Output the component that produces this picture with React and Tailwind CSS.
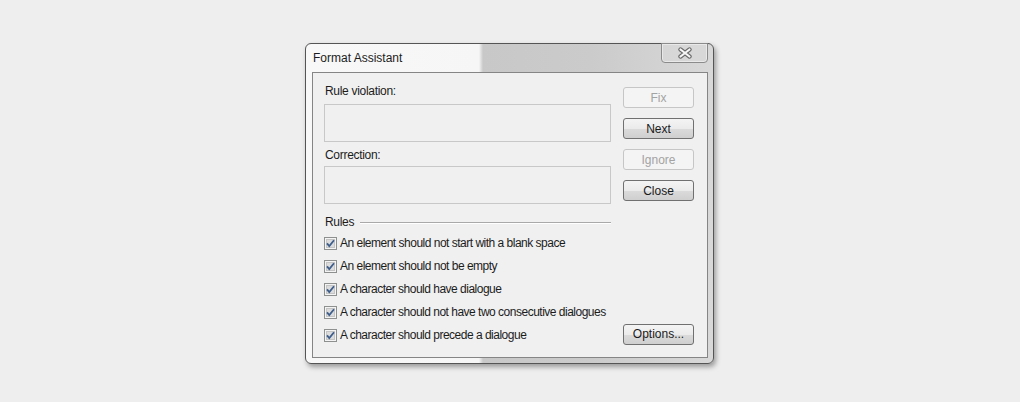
// Format Assistant — Windows 7 style dialog listing the formatting rules the
// script checker runs, with the Fix / Next / Ignore / Close actions on the right.
const RULES = [
  'An element should not start with a blank space',
  'An element should not be empty',
  'A character should have dialogue',
  'A character should not have two consecutive dialogues',
  'A character should precede a dialogue',
]

function Checkbox() {
  return (
    <svg width="13" height="13" viewBox="0 0 13 13" className="shrink-0">
      <rect x="0.5" y="0.5" width="12" height="12" fill="#f4f4f4" stroke="#8e8f8f" />
      <rect x="2.5" y="2.5" width="8" height="8" fill="#dcdcdc" stroke="#c4c4c4" />
      <path d="M3 6.3 L5.3 9 L10 3.3" fill="none" stroke="#3d5d8a" strokeWidth="1.8" />
    </svg>
  )
}

function Button({ children, disabled }) {
  return (
    <button
      type="button"
      className={
        disabled
          ? 'h-[21px] w-[71px] rounded-[3px] border border-[#c6c6c6] bg-[#f4f4f4] text-[12px] text-[#a3a3a3]'
          : 'h-[21px] w-[71px] rounded-[3px] border border-[#707070] bg-[linear-gradient(180deg,#f4f4f4_0%,#ebebeb_50%,#dadada_55%,#cfcfcf_100%)] text-[12px] text-[#1a1a1a]'
      }
    >
      {children}
    </button>
  )
}

// white X with a grey outline, as on the Aero caption button
function CloseGlyph() {
  return (
    <svg width="16" height="12" viewBox="0 0 16 12">
      <path d="M3.5 2.5 L12.5 9.5 M12.5 2.5 L3.5 9.5" stroke="#6a6a6a" strokeWidth="4.4" strokeLinecap="round" />
      <path d="M3.5 2.5 L12.5 9.5 M12.5 2.5 L3.5 9.5" stroke="#f7f7f7" strokeWidth="2.2" strokeLinecap="round" />
    </svg>
  )
}

export default function App() {
  return (
    <div className="h-[402px] w-[1020px] bg-[#efeeee] pl-[305px] pt-[43px] font-['Liberation_Sans',Arial,sans-serif] text-[#1c1c1c]">
      <div className="flex w-[409px] flex-col rounded-[6px] border border-[#555555] bg-[linear-gradient(90deg,#f8f8f8_0%,#f6f6f6_42.5%,#c8c8c8_43.5%,#cbcbcb_70%,#d8d8d8_100%)] pb-[5px] pl-[6px] pr-[5px] shadow-[2px_3px_5px_rgba(0,0,0,0.35)]">
        <div className="flex h-[28px] items-center">
          <span className="pl-[1px] text-[12px] leading-[15px]">Format Assistant</span>
          <div className="-mt-[1px] ml-auto flex h-[20px] w-[47px] items-center justify-center self-start rounded-b-[4px] border border-[#8b8b8b] bg-[#d9d9d9]/60 shadow-[inset_0_0_0_1px_rgba(255,255,255,0.45)]">
            <CloseGlyph />
          </div>
        </div>

        <div className="flex h-[286px] border border-[#858585] bg-[#f0f0f0]">
          <div className="flex w-[298px] flex-col pl-[11px] pt-[11px] text-[12px]">
            <span className="h-[15px] pl-[1px] leading-[15px] tracking-[-0.3px]">Rule violation:</span>
            <div className="mt-[5px] h-[38px] w-[287px] border border-[#c8c8c8] bg-[#f0f0f0]" />
            <span className="mt-[6px] h-[15px] pl-[1px] leading-[15px] tracking-[-0.3px]">Correction:</span>
            <div className="mt-[3px] h-[38px] w-[287px] border border-[#c8c8c8] bg-[#f0f0f0]" />

            <div className="mt-[11px] flex h-[15px] items-center gap-[6px] pl-[1px]">
              <span className="leading-[15px] tracking-[-0.3px]">Rules</span>
              <div className="h-px flex-1 bg-[#a9a9a9] shadow-[0_1px_0_#ffffff]" />
            </div>

            <div className="mt-[2px] flex flex-col">
              {RULES.map((rule) => (
                <label key={rule} className="flex h-[23px] items-center gap-[3px]">
                  <Checkbox />
                  <span className="leading-[15px] tracking-[-0.5px]">{rule}</span>
                </label>
              ))}
            </div>
          </div>

          <div className="ml-[12px] flex flex-col gap-[10px] pb-[12px] pt-[14px]">
            <Button disabled>Fix</Button>
            <Button>Next</Button>
            <Button disabled>Ignore</Button>
            <Button>Close</Button>
            <div className="mt-auto">
              <Button>Options...</Button>
            </div>
          </div>
        </div>
      </div>
    </div>
  )
}
